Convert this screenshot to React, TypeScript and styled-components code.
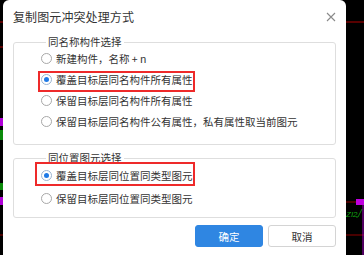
import React from "react";
import styled, { createGlobalStyle } from "styled-components";

const Global = createGlobalStyle`
  html, body { margin: 0; padding: 0; background: #000; }
  body { font-family: "Noto Sans CJK SC", "Noto Sans", sans-serif; }
  * { box-sizing: border-box; }
`;

const Page = styled.div`
  position: relative;
  width: 364px;
  height: 255px;
  overflow: hidden;
  background: #000;
`;

const Canvas = styled.svg`
  position: absolute;
  inset: 0;
  width: 364px;
  height: 255px;
`;

const Dialog = styled.div`
  position: relative;
  margin-left: 3px;
  width: 343px;
  height: 270px;
  background: #fff;
  border-radius: 6px 6px 0 0;
  padding: 0 10px;
  color: #333;
`;

const Header = styled.div`
  height: 32px;
  display: flex;
  align-items: center;
  justify-content: space-between;
  padding-top: 1px;
`;

const Title = styled.div`
  font-size: 12px;
  color: #333;
  letter-spacing: 0.1px;
`;

const Close = styled.button`
  width: 14px;
  height: 14px;
  padding: 0;
  margin-right: -2px;
  border: none;
  background: transparent;
  display: flex;
  align-items: center;
  justify-content: center;
`;

const Group = styled.fieldset<{ $gap: number }>`
  margin: ${(p) => p.$gap}px 0 0 0;
  padding: 0 0 ${(p) => (p.$gap > 5 ? 7 : 12)}px 27px;
  border: 1px solid #dedede;
  border-radius: 3px;
  min-width: 0;
`;

const Legend = styled.legend`
  margin-left: 5px;
  padding: 0 2px;
  font-size: 10.5px;
  line-height: 12px;
  color: #333;
`;

const Row = styled.label<{ $h: number }>`
  position: relative;
  display: flex;
  align-items: center;
  height: ${(p) => p.$h}px;
  font-size: 10.5px;
  color: #333;
  white-space: nowrap;
`;

const Radio = styled.span<{ $on?: boolean }>`
  flex: none;
  width: 11px;
  height: 11px;
  border-radius: 50%;
  border: 1px solid ${(p) => (p.$on ? "#9bb4d0" : "#a8a8a8")};
  background: #fff;
  margin-right: 4px;
  display: flex;
  align-items: center;
  justify-content: center;
  &::after {
    content: "";
    width: 5px;
    height: 5px;
    border-radius: 50%;
    background: ${(p) => (p.$on ? "#1f7ae6" : "transparent")};
  }
`;

const Mark = styled.span<{ $top: number; $left: number; $w: number; $h: number }>`
  position: absolute;
  top: ${(p) => p.$top}px;
  left: ${(p) => p.$left}px;
  width: ${(p) => p.$w}px;
  height: ${(p) => p.$h}px;
  border: 2px solid #ee2a2a;
  pointer-events: none;
`;

const Footer = styled.div`
  margin-top: 7px;
  display: flex;
  justify-content: flex-end;
  gap: 5px;
`;

const Button = styled.button<{ $primary?: boolean }>`
  width: 68px;
  height: 22px;
  padding: 0;
  border-radius: 3px;
  font-family: inherit;
  font-size: 10.5px;
  border: 1px solid ${(p) => (p.$primary ? "#2f86e2" : "#d4d4d4")};
  background: ${(p) => (p.$primary ? "#2f86e2" : "#fff")};
  color: ${(p) => (p.$primary ? "#fff" : "#333")};
`;

type Item = { text: string; on: boolean; mark?: { top: number; left: number; w: number; h: number } };

const group1: Item[] = [
  { text: "新建构件，名称 + n", on: false },
  { text: "覆盖目标层同名构件所有属性", on: true, mark: { top: 2, left: -3, w: 157, h: 21 } },
  { text: "保留目标层同名构件所有属性", on: false },
  { text: "保留目标层同名构件公有属性，私有属性取当前图元", on: false },
];

const group2: Item[] = [
  { text: "覆盖目标层同位置同类型图元", on: true, mark: { top: -2, left: -6, w: 160, h: 24 } },
  { text: "保留目标层同位置同类型图元", on: false },
];

const Options = ({ items, h }: { items: Item[]; h: number }) => (
  <>
    {items.map((it) => (
      <Row key={it.text} $h={h}>
        <Radio $on={it.on} />
        {it.text}
        {it.mark && <Mark $top={it.mark.top} $left={it.mark.left} $w={it.mark.w} $h={it.mark.h} />}
      </Row>
    ))}
  </>
);

export default function App() {
  return (
    <>
      <Global />
      <Page>
        <Canvas viewBox="0 0 364 255">
          <line x1="0" y1="22" x2="364" y2="22" stroke="#b00000" strokeWidth="1" />
          <line x1="0" y1="47" x2="10" y2="47" stroke="#b00000" strokeWidth="1" />
          <rect x="0" y="118" width="3" height="8" fill="#b000d8" />
          <rect x="0" y="130" width="3" height="10" fill="#0a8a0a" />
          <rect x="0" y="183" width="3" height="7" fill="#0a8a0a" />
          <rect x="0" y="197" width="3" height="8" fill="#b000d8" />
          <line x1="0" y1="235" x2="10" y2="235" stroke="#900000" strokeWidth="1" />
          <line x1="340" y1="202" x2="357" y2="202" stroke="#900000" strokeWidth="1" />
          <line x1="340" y1="235" x2="364" y2="235" stroke="#900000" strokeWidth="1" />
          <rect x="356" y="199" width="8" height="6" fill="#c000e0" />
          <line x1="363" y1="205" x2="363" y2="255" stroke="#a000c0" strokeWidth="1" />
          <text x="346" y="217" fill="#10a010" fontSize="8" fontStyle="italic" fontFamily="Liberation Sans, sans-serif">ZI2</text>
          <path d="M356 217 L358 217 L362 209" stroke="#10a010" strokeWidth="0.8" fill="none" />
        </Canvas>
        <Dialog>
          <Header>
            <Title>复制图元冲突处理方式</Title>
            <Close aria-label="关闭">
              <svg width="10" height="10" viewBox="0 0 10 10">
                <path d="M1 1 L9 9 M9 1 L1 9" stroke="#8a8a8a" strokeWidth="1.1" />
              </svg>
            </Close>
          </Header>
          <Group $gap={4}>
            <Legend>同名称构件选择</Legend>
            <Options items={group1} h={21} />
          </Group>
          <Group $gap={7}>
            <Legend>同位置图元选择</Legend>
            <Options items={group2} h={23} />
          </Group>
          <Footer>
            <Button $primary>确定</Button>
            <Button>取消</Button>
          </Footer>
        </Dialog>
      </Page>
    </>
  );
}
